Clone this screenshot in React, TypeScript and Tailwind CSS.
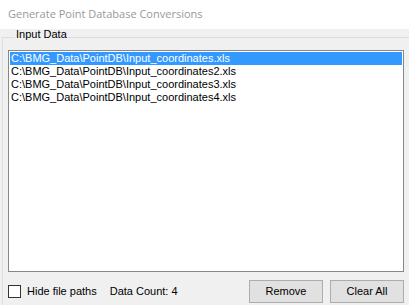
const files = [
  "C:\\BMG_Data\\PointDB\\Input_coordinates.xls",
  "C:\\BMG_Data\\PointDB\\Input_coordinates2.xls",
  "C:\\BMG_Data\\PointDB\\Input_coordinates3.xls",
  "C:\\BMG_Data\\PointDB\\Input_coordinates4.xls",
];

const winFont = { fontFamily: '"Liberation Sans", Arial, sans-serif' };

export default function App() {
  const selected = 0;

  return (
    <div className="w-[409px] h-[305px] overflow-hidden bg-[#f0f0f0] flex flex-col" style={winFont}>
      {/* title bar */}
      <div className="h-[29px] shrink-0 bg-white flex items-center pl-[8px]">
        <span className="text-[11px] text-[#999999] font-['Open_Sans',sans-serif]">
          Generate Point Database Conversions
        </span>
      </div>

      {/* group box, runs past the window edge */}
      <fieldset className="ml-[2px] mt-[-1px] w-[430px] h-[300px] shrink-0 border border-[#dcdcdc] pl-[5px]">
        <legend className="ml-[7px] px-[1px] pb-[6px] text-[11px] leading-[13px] text-black">Input Data</legend>

        <div className="mt-[3px] w-[396px] h-[222px] bg-white border border-[#828790] p-[1px]">
          {files.map((f, i) => (
            <div
              key={f}
              className={
                i === selected
                  ? "h-[13px] leading-[13px] text-[11px] px-[1px] bg-[#3399ff] text-white whitespace-nowrap"
                  : "h-[13px] leading-[13px] text-[11px] px-[1px] text-black whitespace-nowrap"
              }
            >
              {f}
            </div>
          ))}
        </div>

        <div className="w-[396px] mt-[8px] flex items-center text-[11px] text-black">
          <div className="w-[13px] h-[13px] border border-[#333333] bg-white shrink-0" />
          <span className="ml-[6px]">Hide file paths</span>
          <span className="ml-[13px]">Data Count: 4</span>
          <div className="ml-auto flex gap-[7px]">
            <button className="w-[74px] h-[23px] bg-[#e1e1e1] border border-[#adadad] text-[11px]">Remove</button>
            <button className="w-[74px] h-[23px] bg-[#e1e1e1] border border-[#adadad] text-[11px]">Clear All</button>
          </div>
        </div>
      </fieldset>
    </div>
  );
}
